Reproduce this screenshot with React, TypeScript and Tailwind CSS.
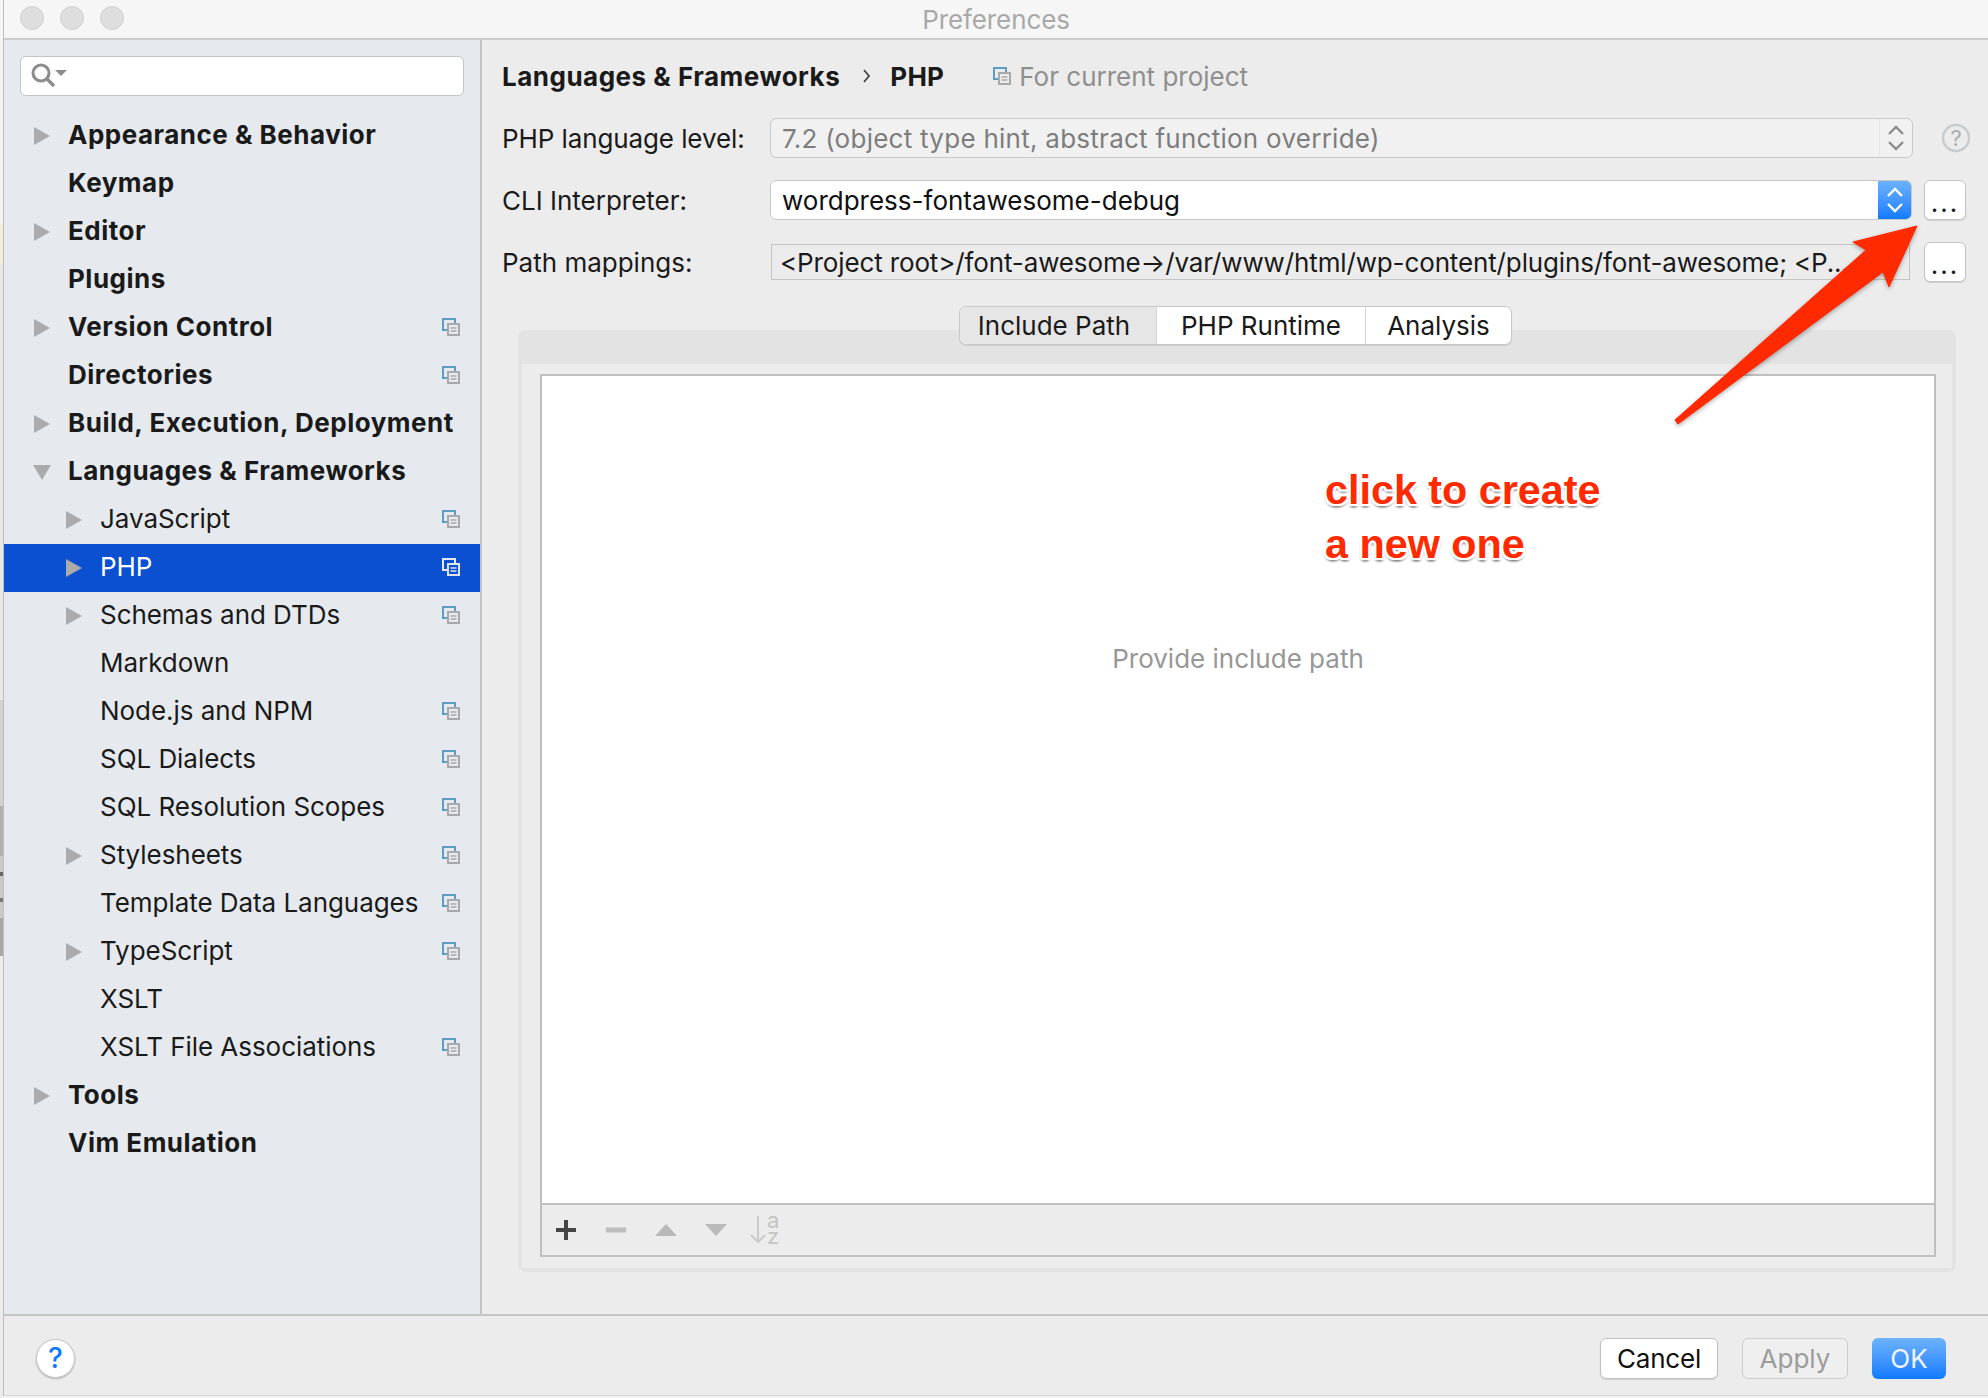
const font = "font-['Inter','Noto_Sans',sans-serif]";

type Row = {
  label: string;
  level: number;
  arrow?: "right" | "down";
  copy?: boolean;
  selected?: boolean;
};

const rows: Row[] = [
  { label: "Appearance & Behavior", level: 0, arrow: "right" },
  { label: "Keymap", level: 0 },
  { label: "Editor", level: 0, arrow: "right" },
  { label: "Plugins", level: 0 },
  { label: "Version Control", level: 0, arrow: "right", copy: true },
  { label: "Directories", level: 0, copy: true },
  { label: "Build, Execution, Deployment", level: 0, arrow: "right" },
  { label: "Languages & Frameworks", level: 0, arrow: "down" },
  { label: "JavaScript", level: 1, arrow: "right", copy: true },
  { label: "PHP", level: 1, arrow: "right", copy: true, selected: true },
  { label: "Schemas and DTDs", level: 1, arrow: "right", copy: true },
  { label: "Markdown", level: 1 },
  { label: "Node.js and NPM", level: 1, copy: true },
  { label: "SQL Dialects", level: 1, copy: true },
  { label: "SQL Resolution Scopes", level: 1, copy: true },
  { label: "Stylesheets", level: 1, arrow: "right", copy: true },
  { label: "Template Data Languages", level: 1, copy: true },
  { label: "TypeScript", level: 1, arrow: "right", copy: true },
  { label: "XSLT", level: 1 },
  { label: "XSLT File Associations", level: 1, copy: true },
  { label: "Tools", level: 0, arrow: "right" },
  { label: "Vim Emulation", level: 0 },
];

function CopyIcon({ light = false, bg = "#e6eaee" }: { light?: boolean; bg?: string }) {
  const back = light ? "#e4e8f2" : "#5d9cc6";
  const front = light ? "#dfe3ec" : "#a9a9a9";
  return (
    <svg width="18" height="18" viewBox="0 0 18 18" className="shrink-0">
      <rect x="1" y="1" width="12" height="11" fill="none" stroke={back} strokeWidth="2" />
      <rect x="6" y="6" width="11" height="11" fill={light ? "#0a50d1" : bg} stroke={front} strokeWidth="2" />
      <path d="M8.5 10h6M8.5 13h6" stroke={front} strokeWidth="1.6" />
    </svg>
  );
}

function TreeArrow({ dir }: { dir: "right" | "down" }) {
  return (
    <svg width="18" height="18" viewBox="0 0 18 18">
      {dir === "right" ? (
        <polygon points="1,0 17,9 1,18" fill="#ababab" />
      ) : (
        <polygon points="0,2 18,2 9,17" fill="#ababab" />
      )}
    </svg>
  );
}

function Chevrons({ color }: { color: string }) {
  return (
    <svg width="18" height="26" viewBox="0 0 18 26">
      <path d="M2 9l7-7 7 7M2 17l7 7 7-7" fill="none" stroke={color} strokeWidth="2.4" />
    </svg>
  );
}

function SidebarRow({ row }: { row: Row }) {
  return (
    <div
      className={`relative h-[48px] flex items-center text-[26px] ${
        row.selected ? "bg-[#0a50d1] text-white" : "text-[#1a1a1a]"
      } ${row.level === 0 ? "font-bold tracking-[0.5px] pl-[64px]" : "pl-[96px] tracking-[-0.05px]"}`}
    >
      {row.arrow && (
        <span className={`absolute top-[15px] ${row.level === 0 ? "left-[29px]" : "left-[61px]"}`}>
          <TreeArrow dir={row.arrow} />
        </span>
      )}
      <span className="flex-1 whitespace-nowrap pb-[4px]">{row.label}</span>
      {row.copy && (
        <span className="mr-[20px] mb-[2px] flex">
          <CopyIcon light={row.selected} />
        </span>
      )}
    </div>
  );
}

function DotsButton() {
  return (
    <button className="w-[42px] h-[40px] ml-[12px] bg-white border border-[#c4c4c4] rounded-[6px] flex items-end justify-center pb-[3px] text-[26px] leading-none text-[#1a1a1a] tracking-[2px] shadow-[0_1px_1px_rgba(0,0,0,0.12)]">
      ...
    </button>
  );
}

export default function App() {
  return (
    <div className={`w-[1988px] h-[1398px] overflow-hidden bg-[#f2f2f2] flex ${font}`}>
      {/* desktop sliver on the left of the window */}
      <div className="w-[3px] h-full flex flex-col bg-[#ececec]">
        <div className="h-[224px] bg-[#f4f4f4]" />
        <div className="h-[40px] bg-[#efeed8]" />
        <div className="h-[436px] bg-[#e8e8e8]" />
        <div className="h-[106px] bg-[#d2d2d2]" />
        <div className="h-[50px] bg-[#b0b0b0]" />
        <div className="h-[16px] bg-[#cacaca]" />
        <div className="h-[4px] bg-[#666666]" />
        <div className="h-[22px] bg-[#cacaca]" />
        <div className="h-[4px] bg-[#777777]" />
        <div className="h-[16px] bg-[#cacaca]" />
        <div className="h-[38px] bg-[#a8a8a8]" />
      </div>

      <div className="w-[1985px] h-[1396px] border-l-[1px] border-[#bdbdbd] border-b border-b-[#d6d6d6] flex flex-col bg-[#ececec]">
        {/* Title bar */}
        <div className="relative h-[40px] shrink-0 bg-[#f6f6f6] border-b-2 border-[#cccccc] flex items-center justify-center">
          <div className="absolute left-[16px] top-[6px] flex gap-[16px]">
            <span className="w-[24px] h-[24px] rounded-full bg-[#dedede] border border-[#d0d0d0]" />
            <span className="w-[24px] h-[24px] rounded-full bg-[#dedede] border border-[#d0d0d0]" />
            <span className="w-[24px] h-[24px] rounded-full bg-[#dedede] border border-[#d0d0d0]" />
          </div>
          <span className="text-[26px] text-[#a9a9a9] tracking-[-0.1px]">Preferences</span>
        </div>

        <div className="flex h-[1276px] shrink-0 border-b-2 border-[#c6c6c6]">
          {/* Sidebar */}
          <aside className="w-[478px] shrink-0 bg-[#e6eaee] border-r-2 border-[#c4c4c4]">
            <div className="mt-[16px] mx-[16px] h-[40px] bg-white border border-[#c2c5c9] rounded-[6px] flex items-center pl-[7px]">
              <svg width="38" height="26" viewBox="0 0 38 26" className="overflow-visible">
                <circle cx="13" cy="10" r="8" fill="none" stroke="#8c8c8c" strokeWidth="3" />
                <path d="M19 16l7 7" stroke="#8c8c8c" strokeWidth="3.4" />
                <polygon points="27,7 39,7 33,13" fill="#8c8c8c" />
              </svg>
            </div>
            <div className="mt-[16px]">
              {rows.map((r) => (
                <SidebarRow key={r.label} row={r} />
              ))}
            </div>
          </aside>

          {/* Main panel */}
          <main className="relative flex-1 min-w-0 pt-[16px] text-[26px] text-[#1a1a1a]">
            <div className="h-[42px] pl-[20px] pb-[2px] flex items-center">
              <span className="font-bold tracking-[0.5px]">Languages &amp; Frameworks</span>
              <svg width="10" height="16" viewBox="0 0 10 16" className="ml-[22px]">
                <path d="M2 2l5 6-5 6" fill="none" stroke="#444" strokeWidth="1.8" />
              </svg>
              <span className="font-bold tracking-[0.3px] ml-[18px]">PHP</span>
              <span className="ml-[49px] flex">
                <CopyIcon bg="#ececec" />
              </span>
              <span className="ml-[8px] text-[#8f8f8f]">For current project</span>
            </div>

            <div className="mt-[20px] h-[40px] pl-[20px] flex items-center">
              <span className="w-[268px] tracking-[-0.1px]">PHP language level:</span>
              <div className="w-[1143px] h-[40px] bg-[#f1f1f1] border border-[#c8c8c8] rounded-[6px] flex items-center pl-[11px] text-[#7d7d7d]">
                <span className="flex-1 whitespace-nowrap tracking-[0.26px]">7.2 (object type hint, abstract function override)</span>
                <span className="w-[33px] h-full border-l border-[#e6e6e6] flex items-center justify-center">
                  <Chevrons color="#8c8c8c" />
                </span>
              </div>
              <svg width="30" height="30" viewBox="0 0 30 30" className="ml-[28px]">
                <circle cx="15" cy="15" r="13" fill="none" stroke="#c7cbcd" strokeWidth="2.4" />
                <text x="15" y="23" textAnchor="middle" fontSize="22" fill="#a8acae">?</text>
              </svg>
            </div>

            <div className="mt-[22px] h-[40px] pl-[20px] flex items-center">
              <span className="w-[268px]">CLI Interpreter:</span>
              <div className="w-[1142px] h-[40px] bg-white border border-[#c8c8c8] rounded-[6px] flex items-center pl-[11px] overflow-hidden">
                <span className="flex-1 whitespace-nowrap text-[#111]">wordpress-fontawesome-debug</span>
                <span className="w-[33px] h-[40px] bg-linear-to-b from-[#6db3fe] to-[#0b79ff] flex items-center justify-center">
                  <Chevrons color="#ffffff" />
                </span>
              </div>
              <DotsButton />
            </div>

            <div className="mt-[22px] h-[40px] pl-[20px] flex items-center">
              <span className="w-[269px]">Path mappings:</span>
              <div className="w-[1139px] h-[36px] bg-[#ececec] border border-[#c4c4c4] flex items-center pl-[8px] overflow-hidden whitespace-nowrap tracking-[-0.13px]">
                &lt;Project root&gt;/font-awesome→/var/www/html/wp-content/plugins/font-awesome; &lt;P...
              </div>
              <span className="ml-[2px]">
                <DotsButton />
              </span>
            </div>

            {/* Tabs sit over the top edge of the panel */}
            <div className="relative z-10 mt-[24px] -mb-[15px] ml-[477px] w-[553px] h-[39px] flex bg-white border border-[#c8c8c8] rounded-[7px] overflow-hidden shadow-[0_1px_1px_rgba(0,0,0,0.1)]">
              <div className="w-[197px] bg-[#e6e6e6] border-r border-[#d6d6d6] flex items-center justify-center pr-[8px]">Include Path</div>
              <div className="w-[209px] border-r border-[#d6d6d6] flex items-center justify-center">PHP Runtime</div>
              <div className="flex-1 flex items-center justify-center">Analysis</div>
            </div>

            <div className="ml-[36px] w-[1438px] h-[942px] bg-[#e3e3e3] rounded-[8px] pt-[34px] px-[4px] pb-[4px]">
              <div className="h-full bg-[#ececec] pt-[10px] pb-[11px] pl-[18px] pr-[16px]">
                <div className="h-full border-2 border-[#bfbfbf] flex flex-col">
                  <div className="flex-1 bg-white border-b-2 border-[#bfbfbf] flex items-center justify-center pb-[262px] text-[#979797]">
                    Provide include path
                  </div>
                  <div className="h-[50px] flex items-center pl-[14px]">
                    <svg width="240" height="44" viewBox="0 0 240 44">
                      <path d="M10 12v20M0 22h20" stroke="#454545" strokeWidth="4" />
                      <path d="M50 22h20" stroke="#bdbdbd" strokeWidth="5" />
                      <polygon points="99,28 121,28 110,16" fill="#b9b9b9" />
                      <polygon points="149,16 171,16 160,28" fill="#b9b9b9" />
                      <path d="M202 8v26M195 27l7 7 7-7" fill="none" stroke="#cbcbcb" strokeWidth="2" />
                      <text x="211" y="20" fontSize="22" fill="#c4c4c4">a</text>
                      <text x="211" y="36" fontSize="22" fill="#c4c4c4">z</text>
                    </svg>
                  </div>
                </div>
              </div>
            </div>

            {/* Annotation drawn on top of the screenshot */}
            <div className="absolute left-[843px] top-[423px] font-['Liberation_Sans',sans-serif] font-bold text-[41.3px] leading-[54px] text-[#ff2a00] [text-shadow:2px_0_0_#fff,-2px_0_0_#fff,0_2px_0_#fff,0_-2px_0_#fff,2px_2px_0_#fff,-2px_2px_0_#fff,2px_-2px_0_#fff,-2px_-2px_0_#fff,0_4px_2px_rgba(0,0,0,0.28),2px_3px_2px_rgba(0,0,0,0.18),-2px_3px_2px_rgba(0,0,0,0.18)]">
              click to create
              <br />
              a new one
            </div>
            <svg width="260" height="215" viewBox="0 0 260 215" className="absolute left-[1185px] top-[184px] overflow-visible">
              <polygon
                points="250,2 186,18 199,26 8,196 11,200 216,48 222,63"
                fill="#ff2a00"
                stroke="#ff2a00"
                strokeWidth="1"
                className="drop-shadow-[0_2px_2px_rgba(0,0,0,0.3)]"
              />
            </svg>
          </main>
        </div>

        {/* Footer */}
        <div className="flex-1 flex items-center pl-[32px] pr-[42px] pt-[5px]">
          <button className="w-[39px] h-[39px] rounded-full bg-white border border-[#c6c6c6] shadow-[0_1px_2px_rgba(0,0,0,0.25)] text-[#0b79ff] text-[28px] font-medium flex items-center justify-center">
            ?
          </button>
          <div className="flex-1" />
          <button className="w-[118px] h-[41px] bg-white border border-[#c0c0c0] rounded-[6px] text-[26px] tracking-[-0.2px] text-[#111] flex items-center justify-center shadow-[0_1px_1px_rgba(0,0,0,0.12)]">
            Cancel
          </button>
          <button className="ml-[24px] w-[106px] h-[41px] bg-[#efefef] border border-[#cccccc] rounded-[6px] text-[26px] text-[#9c9c9c] flex items-center justify-center">
            Apply
          </button>
          <button className="ml-[24px] w-[74px] h-[41px] bg-linear-to-b from-[#6db3fe] to-[#0b79ff] rounded-[6px] text-[26px] text-[#f0f4ff] flex items-center justify-center">
            OK
          </button>
        </div>
      </div>
    </div>
  );
}
